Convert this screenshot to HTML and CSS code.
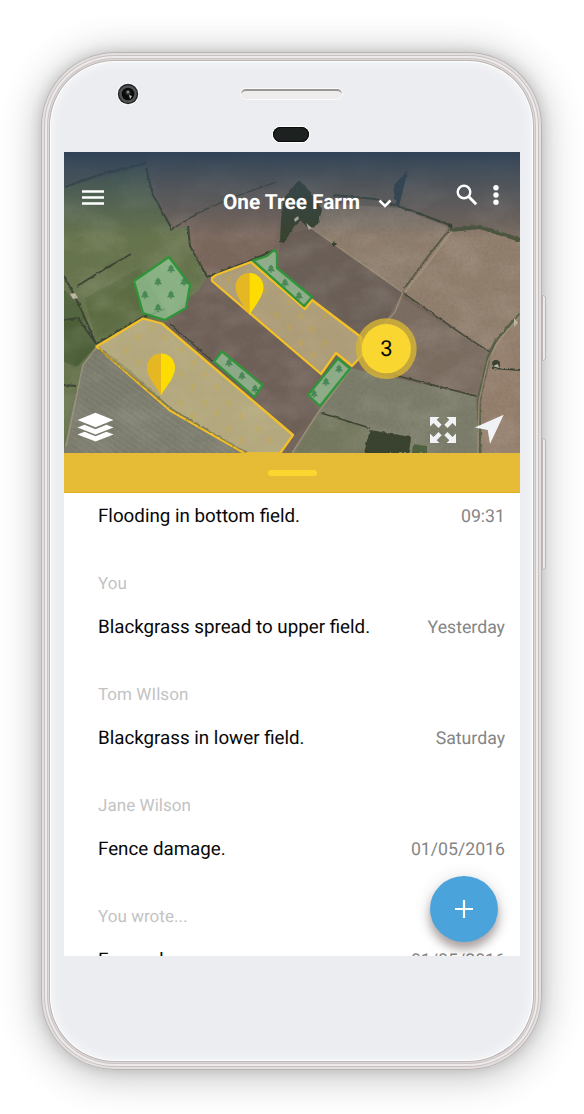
FILE: index.html
```
<!DOCTYPE html>
<html lang="en">
<head>
<meta charset="utf-8">
<title>One Tree Farm</title>
<link rel="stylesheet" href="styles.css">
</head>
<body>
<div class="phone">
  <span class="side-button power"></span>
  <span class="side-button volume"></span>
  <div class="bezel">
    <svg class="camera" viewBox="0 0 22 22"><circle cx="11" cy="11" r="11" fill="#fff"/><circle cx="11" cy="11" r="10.2" fill="#242626"/><circle cx="11" cy="11" r="8.8" fill="#515455"/><circle cx="11" cy="11" r="6.3" fill="#090a0a"/><circle cx="11" cy="9.5" r="2.5" fill="#37393a"/><circle cx="11" cy="9" r="1" fill="#aaa"/><path d="M12 12l3 1-2 3z" fill="#c4c4c4"/></svg>
    <div class="sensors"><span class="speaker"></span><span class="proximity"></span></div>
  </div>
  <main class="screen">
    <header class="map">
      <svg class="map-art" viewBox="64 152 456 301">
        <defs>
          <linearGradient id="shade" x2="0" y2="1"><stop offset="0" stop-color="#2b4056" stop-opacity=".92"/><stop offset=".45" stop-color="#34485a" stop-opacity=".5"/><stop offset="1" stop-color="#34485a" stop-opacity="0"/></linearGradient>
          <filter id="grain" x="0" y="0" width="100%" height="100%"><feTurbulence type="fractalNoise" baseFrequency=".35" numOctaves="3" seed="4"/><feColorMatrix values="0 0 0 0 .1  0 0 0 0 .1  0 0 0 0 .08  1.6 0 0 0 -.65"/></filter>
          <filter id="mottle" x="0" y="0" width="100%" height="100%"><feTurbulence type="fractalNoise" baseFrequency=".025 .04" numOctaves="3" seed="9"/><feColorMatrix values="0 0 0 0 .85  0 0 0 0 .8  0 0 0 0 .7  1.5 0 0 0 -.6"/></filter>
          <filter id="rough" x="-10%" y="-10%" width="120%" height="120%"><feTurbulence type="fractalNoise" baseFrequency=".2" numOctaves="2" seed="2"/><feDisplacementMap in="SourceGraphic" scale="3" xChannelSelector="R" yChannelSelector="G"/></filter>
          <pattern id="furrows" width="5" height="5" patternUnits="userSpaceOnUse" patternTransform="rotate(35)"><path d="M0 1h5" stroke="#ddd5b8" stroke-opacity=".1"/></pattern>
          <g id="tree"><path d="M0-4.500l3 3.500H1.800l2.200 3.200H.6v1.800H-.6V2.200H-4L-1.800-1H-3z" fill="#397f4b" fill-opacity=".8"/></g>
          <g id="crop" fill="none" stroke="#d0ab38" stroke-opacity=".5" stroke-width=".8"><path d="M0 4v-7M0 3l-3-4M0 3l3-4M0 0l-2-3M0 0l2-3"/></g>
          <g id="pin"><path d="M0-42c-8 0-14 6-14 14C-14-18-5-9 0 0z" fill="#e5b723"/><path d="M0-42c8 0 14 6 14 14C14-18 5-9 0 0z" fill="#fddc02"/></g>
        </defs>
        <path d="M64 152h456v301H64z" fill="#75665c"/>
        <path d="M64 186l82-21 7 30 19 34 16-3 2 20 17 31-20 30-20 15-24-4-47 29L64 453z" fill="#67754d"/>
        <path d="M64 152h85l-3 14-82 21z" fill="#65655b"/>
        <path d="M64 290l14 12 18 41-20 24-12-5z" fill="#536740"/>
        <path d="M85 298l55-30 30 50-26 0-47 27z" fill="#5d6d42"/>
        <path d="M64 320l16-2 16 28-18 20-14-5z" fill="#4c6038"/>
        <path d="M96 347l-14 18-18 84v4h182l-76-43z" fill="#7b7c6e"/>
        <path d="M97 348l-12 17-18 88h179l-76-43z" fill="url(#furrows)"/>
        <path d="M172 229l28-18 75-26 18 8-14 28-5 28-34 15-33 13-17-31-2-20z" fill="#7b675c"/>
        <path d="M207 278l39-16 4 3-35 13 105 134-26 24-130-112 24-18z" fill="#6f6058"/>
        <path d="M215 282l80 66 28 26-16 22-15 26-125-98 21-26z" fill="#6f6058"/>
        <path d="M281 236l31-8 90 64-10 26-28 22-54-45-33-27z" fill="#6b5f57"/>
        <path d="M322 203l78 5 49 19-24 33-23 32-90-64z" fill="#8f7e6e"/>
        <path d="M449 230l31-1 40 12v75l-32 34-86-58 20-26z" fill="#927f6e"/>
        <path d="M400 297l90 55-14 44-76-18-28-34z" fill="#7c6d61"/>
        <path d="M520 312l-25 28-13 56-5 57h43z" fill="#957f6d"/>
        <path d="M350 368l126 28 3 57H292l34-52z" fill="#7d7d6b"/>
        <path d="M320 412l50 16-5 25h-70z" fill="#75795f"/>
        <path d="M64 152h456v301H64z" filter="url(#mottle)" opacity=".18"/>
        <g fill="none" stroke="#3e4534" stroke-width="2" filter="url(#rough)">
          <path d="M65 187l34-12 47-12M146 168l7 27 19 34M188 226l2 20 17 31 40-15 28-12M77 286l31-19 23-13M64 276l14 26 18 42M64 320l14-2 18 26M64 385l12 1M96 346l30 22 44 40 75 46" />
          <path d="M172 229l28-17 34-15 42-15M170 324l42 37" stroke-width="1.2"/>
          <path d="M96 344l47-27 22-8" />
          <path d="M333 195l42 4 26 8 49 18" stroke-width="2"/><path d="M450 230l30-3 40 13" stroke="#4d573c" stroke-width="4"/>
          <path d="M449 230l-23 29-22 30" stroke="#5b5a46" stroke-width="2"/><path d="M402 292l64 45 24 15" stroke-width="1.2"/>
          <path d="M520 314l-24 26-8 18-9 40 1 54" stroke="#596047" stroke-width="3"/><path d="M394 375l82 21" stroke-width="1.6"/><path d="M321 413l49 15" stroke-width="1.8"/><path d="M492 368l28 2" stroke-width="2"/>
        </g>
        <g fill="none" stroke="#a99c85" stroke-width="1.4">
          <path d="M311 228l91 64M403 292l-8 20-30 34M350 370l-31 41-27 42M97 347l-14 18-17 82M522 313l-25 30-9 18-9 40-1 52M452 231l-24 32-23 29" opacity=".7"/>
        </g>
        <g fill="#37422f" filter="url(#rough)"><path d="M284 198l8-10 7-8 8 8 10 14 5 8-4 14-9 5-8-8-8 7-9 15-4-1 1-22z"/><path d="M408 170l-15 16 3 20h3z" fill="#33444b"/><path d="M370 430l41 7-2 16h-45z"/><path d="M413 444l14 2v7h-15z" fill="#50623f"/><circle cx="334" cy="244" r="2.500"/><circle cx="450" cy="226" r="2.500"/><circle cx="496" cy="364" r="4"/></g>
        <g fill="#c1b9a9"><path d="M294 219l4-3 1 3-4 3zM306 223l6 5-3 2zM514 318l4 5-4 4zM493 366l5-2 1 4zM70 294l5-1 3 5-5 1z"/></g>
        <path d="M64 152h456v301H64z" filter="url(#grain)" opacity=".2"/>
        <path d="M64 152h456v86H64z" fill="url(#shade)"/>
        <g fill="#e8de9a" fill-opacity=".55" stroke="#f3c028" stroke-width="2.300" stroke-linejoin="round"><path d="M96.500 346.500L143 318.500l19 5 131 111.500-13 18.500h-35l-75-43z"/><path fill="#dccb90" d="M212 281l0-3 4-3 35-13 54 47 7-9 49 37 2 17-11 12-16-13-15 21z"/></g>
        <path d="M99 349l27 22 45 38 76 44" fill="none" stroke="#504f39" stroke-width="2" opacity=".4" filter="url(#rough)"/>
        <g fill="#9cd1a1" fill-opacity=".65" stroke="#30953a" stroke-width="2.300" stroke-linejoin="round"><path d="M134 281l35-24 21 28-4 23-21 12-22-7z"/><path d="M253 260.500l14-4.500 7-6 3 3v15l35 29-8 9z"/><path d="M222 351.500l40.500 33.500-8 12-40.500-35.500z"/><path d="M338 358.500l12 10-30 37.500-12-11z"/></g>
        <g><use href="#tree" x="171" y="269"/><use href="#tree" x="158" y="282"/><use href="#tree" x="184" y="282"/><use href="#tree" x="145" y="295"/><use href="#tree" x="171" y="295"/><use href="#tree" x="158" y="308"/><use href="#tree" x="271" y="269"/><use href="#tree" x="285" y="283"/><use href="#tree" x="299" y="296"/><use href="#tree" x="229" y="363"/><use href="#tree" x="242" y="376"/><use href="#tree" x="255" y="389"/><use href="#tree" x="339" y="369"/><use href="#tree" x="326" y="382"/><use href="#tree" x="314" y="394"/></g>
        <g>
          <use href="#crop" x="127" y="350"/><use href="#crop" x="139" y="337"/><use href="#crop" x="152" y="327"/><use href="#crop" x="164" y="337"/><use href="#crop" x="139" y="362"/><use href="#crop" x="181" y="350"/><use href="#crop" x="193" y="363"/><use href="#crop" x="181" y="374"/><use href="#crop" x="193" y="387"/><use href="#crop" x="205" y="374"/><use href="#crop" x="217" y="387"/><use href="#crop" x="181" y="403"/><use href="#crop" x="205" y="403"/><use href="#crop" x="193" y="416"/><use href="#crop" x="217" y="413"/><use href="#crop" x="229" y="403"/><use href="#crop" x="241" y="416"/><use href="#crop" x="229" y="429"/><use href="#crop" x="241" y="440"/><use href="#crop" x="259" y="429"/><use href="#crop" x="270" y="440"/>
          <use href="#crop" x="229" y="279"/><use href="#crop" x="265" y="291"/><use href="#crop" x="277" y="315"/><use href="#crop" x="289" y="302"/><use href="#crop" x="289" y="327"/><use href="#crop" x="301" y="316"/><use href="#crop" x="301" y="343"/><use href="#crop" x="313" y="329"/><use href="#crop" x="313" y="355"/><use href="#crop" x="325" y="316"/><use href="#crop" x="325" y="343"/>
        </g>
        <use href="#pin" x="161" y="395.500"/><use href="#pin" x="249.500" y="315"/>
        <circle cx="386.300" cy="348.700" r="30.400" fill="#d7b534" fill-opacity=".8"/><circle cx="386.300" cy="348.700" r="24.600" fill="#f9d730"/>
        <g fill="#fff"><path d="M95.500 412.700l18 7.200-18 7.300-18-7.300z"/><path d="M77.500 427.500l7-2.700 11 4.400 11-4.400 7 2.700-18 7z"/><path d="M77.500 434.500l7-2.700 11 4.400 11-4.400 7 2.700-18 7z"/></g>
        <g fill="#f1f2f5"><path id="corner" d="M430 417h9.500l-2.800 2.800 5 5-3.200 3.200-5-5-3.500 3.500z"/><use href="#corner" transform="matrix(-1 0 0 1 886 0)"/><use href="#corner" transform="matrix(1 0 0 -1 0 860)"/><use href="#corner" transform="matrix(-1 0 0 -1 886 860)"/><path d="M503.700 414.700L490 444l-2.300-14-13-2.400z"/></g>
      </svg>
      <span class="cluster-count">3</span>
      <nav class="toolbar">
        <svg class="menu" viewBox="0 0 22 15"><path d="M0 1.500h22M0 7.500h22M0 13.500h22" stroke="#fff" stroke-width="2.500"/></svg>
        <h1>One Tree Farm</h1>
        <svg class="chevron" viewBox="0 0 14 9"><path d="M1.500 1.500L7 7l5.500-5.500" fill="none" stroke="#fff" stroke-width="2.500"/></svg>
        <svg class="search" viewBox="0 0 22 22"><circle cx="8" cy="8" r="6.300" fill="none" stroke="#fff" stroke-width="2.400"/><path d="M12.800 12.800l7.400 7.400" stroke="#fff" stroke-width="3"/></svg>
        <svg class="more" viewBox="0 0 6 20"><g fill="#fff"><circle cx="3" cy="2.700" r="2.700"/><circle cx="3" cy="10" r="2.700"/><circle cx="3" cy="17.300" r="2.700"/></g></svg>
      </nav>
    </header>
    <div class="drawer-handle"><span></span></div>
    <section class="notes">
      <article class="note"><div class="summary"><p class="message">Flooding in bottom field.</p><time>09:31</time></div><p class="author">You</p></article>
      <article class="note"><div class="summary"><p class="message">Blackgrass spread to upper field.</p><time>Yesterday</time></div><p class="author">Tom WIlson</p></article>
      <article class="note"><div class="summary"><p class="message">Blackgrass in lower field.</p><time>Saturday</time></div><p class="author">Jane Wilson</p></article>
      <article class="note"><div class="summary"><p class="message">Fence damage.</p><time>01/05/2016</time></div><p class="author">You wrote...</p></article>
      <article class="note"><div class="summary"><p class="message">Fence damage.</p><time>01/05/2016</time></div></article>
    </section>
    <button class="add" aria-label="Add note"><svg viewBox="0 0 18 18"><path d="M9 0v18M0 9h18" stroke="#fff" stroke-width="2.200"/></svg></button>
  </main>
</div>
</body>
</html>
```
FILE: styles.css
```
* { box-sizing: border-box; }
body { margin: 0; height: 1114px; padding: 52px 42px 0 41px; background: #fff; overflow: hidden; font-family: Roboto, sans-serif; text-rendering: geometricPrecision; }
p, h1 { margin: 0; }
svg { display: block; }
.phone {
  position: relative;
  height: 1018px;
  padding: 9px 22px 0 23px;
  border-radius: 74px;
  background: #ecedf1;
  box-shadow:
    inset 0 0 0 1px #bab4b4, inset 0 0 0 3px #e4dfdf, inset 0 0 0 4px #c9c2c3,
    inset 0 0 0 6px #eeeaea, inset 0 0 0 7px #cac4c4, inset 0 0 0 8px #dfdada, inset 0 0 0 9px #bbb4b3,
    inset 0 0 0 10px #fff, inset 0 0 8px 12px #f5f7f9,
    0 0 12px rgba(65, 70, 70, .2), 0 4px 36px 4px rgba(70, 70, 70, .32);
}
.side-button { position: absolute; right: -4px; width: 4px; border: 1px solid #bcb5b4; border-radius: 0 3px 3px 0; background: #eeeaea; }
.power { top: 243px; height: 66px; }
.volume { top: 386px; height: 132px; }
.bezel { display: grid; grid-template-columns: 130px 194px 1fr; height: 91px; }
.camera { width: 22px; height: 22px; margin: 22px 0 0 53px; }
.sensors { display: flex; flex-direction: column; align-items: center; padding-top: 28px; }
.speaker { width: 101px; height: 10px; border-radius: 5px; border-top: 2px solid #999795; background: #efedeb; box-shadow: 0 0 0 1px #f9f9fa; }
.proximity { width: 36px; height: 15px; margin-top: 28px; border-radius: 8px; background: #1d211f; box-shadow: 0 0 0 1px #fff, inset 0 0 0 1px #080b09; }
.screen { position: relative; display: flex; flex-direction: column; height: 804px; overflow: hidden; background: #fff; }
.map { position: relative; flex: none; height: 301px; }
.map-art { position: absolute; left: 0; top: 0; width: 456px; height: 301px; }
.cluster-count { position: absolute; left: 298px; top: 184px; width: 49px; text-align: center; font-size: 22px; line-height: 28px; color: #080800; }
.toolbar { position: relative; display: flex; align-items: flex-start; padding: 32px 21px 0 18px; }
.toolbar svg { flex: none; overflow: visible; }
.menu { width: 22px; height: 15px; margin-top: 6px; }
h1 { width: 138px; margin: 5px 0 0 119px; color: #fff; font-size: 20.800px; line-height: 28px; font-weight: 700; white-space: nowrap; }
.chevron { width: 14px; height: 9px; margin: 15px 0 0 17px; }
.search { width: 22px; height: 22px; margin-left: 64px; }
.more { width: 6px; height: 20px; margin: 1px 0 0 auto; }
.drawer-handle { display: flex; flex: none; align-items: flex-start; justify-content: center; height: 40px; padding-top: 17px; background: #e6bb35; box-shadow: inset 0 -1px #e0b022; }
.drawer-handle span { width: 49px; height: 6px; border-radius: 3px; background: #f9d730; }
.notes { padding: 10px 15px 0 34px; }
.note { height: 111px; }
.summary { display: flex; align-items: center; justify-content: space-between; height: 26px; line-height: 26px; white-space: nowrap; }
.message { color: #080808; font-size: 18.750px; }
time { padding-top: 1px; color: #858585; font-size: 17.700px; }
.author { padding-top: 43px; color: #c3c3c3; font-size: 17px; line-height: 24px; letter-spacing: .05px; }
.add { position: absolute; left: 366px; top: 724px; display: flex; align-items: center; justify-content: center; width: 68px; height: 66px; padding: 0; border: 0; border-radius: 50%; background: #4ba3db; box-shadow: 0 7px 10px rgba(70, 50, 50, .4), 0 2px 18px rgba(70, 50, 50, .15); }
.add svg { width: 18px; height: 18px; }
```
